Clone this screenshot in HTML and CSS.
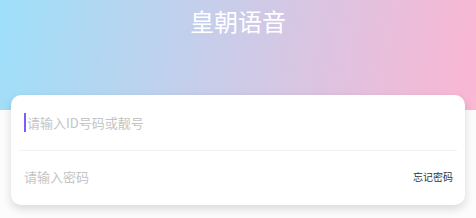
FILE: index.html
```html
<!DOCTYPE html>
<html lang="zh-CN">
<head>
    <meta charset="UTF-8">
    <meta name="viewport" content="width=device-width, initial-scale=1.0">
    <title>皇朝语音</title>
    <link rel="stylesheet" href="styles.css">
</head>
<body>
    <header class="hero">
        <h1 class="app-title">皇朝语音</h1>
    </header>

    <div class="login-card">
        <div class="field">
            <span class="caret"></span>
            <span class="placeholder">请输入ID号码或靓号</span>
        </div>
        <div class="divider"></div>
        <div class="field field-password">
            <span class="placeholder">请输入密码</span>
            <a href="#" class="forgot-link">忘记密码</a>
        </div>
    </div>
</body>
</html>
```

FILE: styles.css
```css
* {
    margin: 0;
    padding: 0;
    box-sizing: border-box;
    font-family: 'Noto Sans CJK SC', 'Noto Sans', sans-serif;
}

body {
    background: #fcfcfc;
    min-height: 100vh;
}

/* Header */
.hero {
    height: 110px;
    background: linear-gradient(100deg, #9edff9 0%, #cccbe8 50%, #fbb6d3 100%);
    text-align: center;
    padding-top: 6px;
}

.app-title {
    color: #fff;
    font-size: 24px;
    font-weight: normal;
    line-height: 30px;
}

/* Login card */
.login-card {
    margin: -15px 11px 0;
    background: #fff;
    border-radius: 10px;
    box-shadow: 0 4px 10px rgba(0, 0, 0, 0.14);
    padding: 0 8px;
}

.field {
    display: flex;
    align-items: center;
    height: 55px;
    padding: 0 5px;
}

.field-password {
    height: 54px;
    padding: 0 4px 4px 5px;
}

.caret {
    width: 2px;
    height: 19px;
    background: #7c5cff;
    margin-right: 1px;
}

.placeholder {
    font-size: 13px;
    color: #c4c4c4;
}

.divider {
    height: 1px;
    background: #f3f3f3;
}

.forgot-link {
    margin-left: auto;
    font-size: 10px;
    color: #333;
    text-decoration: none;
}
```
